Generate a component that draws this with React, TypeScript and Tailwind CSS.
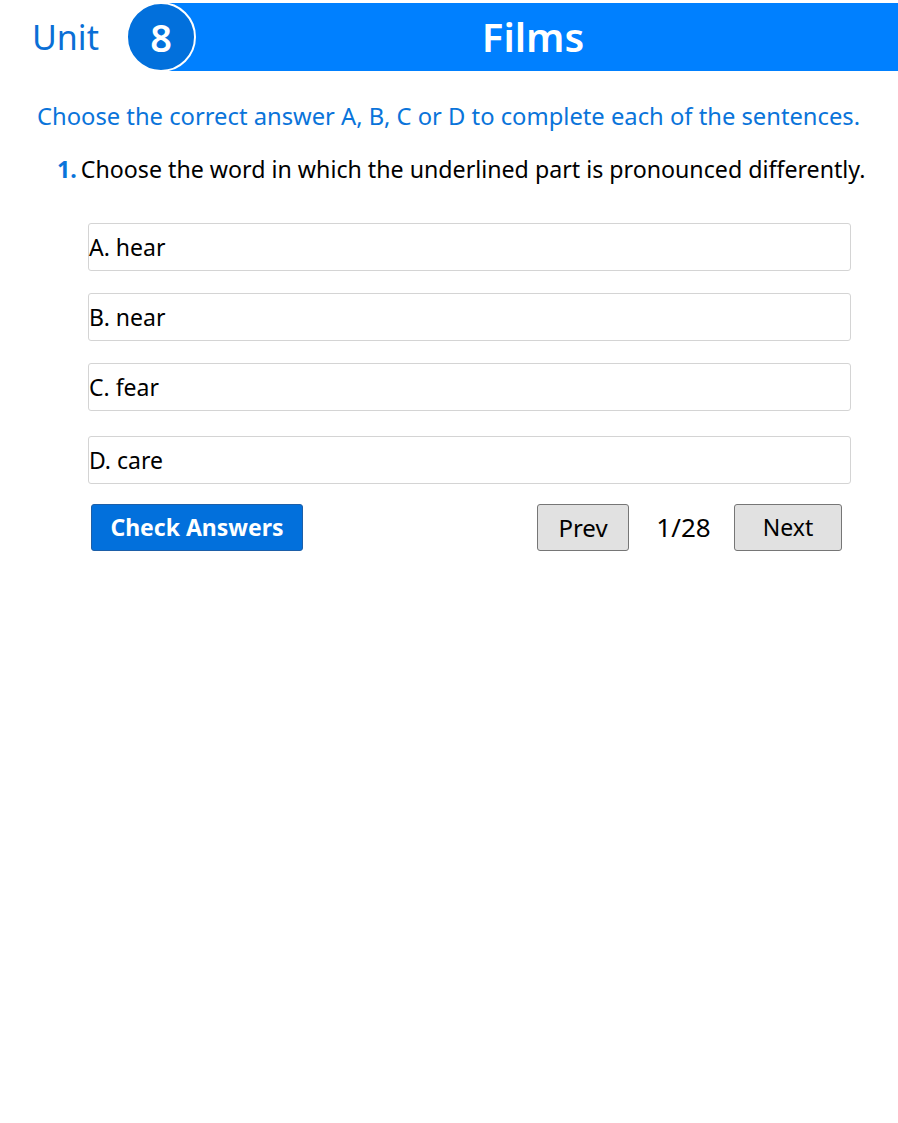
const options = ["A. hear", "B. near", "C. fear", "D. care"];

export default function App() {
    return (
        <div className="w-[898px] min-h-[1123px] bg-white font-['Noto_Sans',sans-serif] text-black">
            {/* Header */}
            <div className="flex items-center pt-[2px] h-[71px]">
                <div className="w-[126px] pl-[32px] text-[34px] leading-none text-[#0a6fd6]">
                    Unit
                </div>
                <div className="relative flex-1 h-[69px]">
                    <div className="absolute left-[34px] right-0 top-[1px] h-[68px] bg-[#0080ff] flex items-center justify-center pl-[8px]">
                        <span className="text-white text-[40px] font-semibold leading-none">
                            Films
                        </span>
                    </div>
                    <div className="absolute left-0 top-0 w-[70px] h-[70px] rounded-full bg-[#0270dc] border-2 border-white flex items-center justify-center">
                        <span className="text-white text-[38px] font-semibold leading-none">
                            8
                        </span>
                    </div>
                </div>
            </div>

            <p className="mt-[30px] pl-[37px] text-[23.75px] leading-[30px] text-[#0a74da]">
                Choose the correct answer A, B, C or D to complete each of the sentences.
            </p>

            <p className="mt-[23px] pl-[57px] text-[23.2px] leading-[30px]">
                <span className="text-[#0a74da] font-bold mr-[4px]">1.</span>
                Choose the word in which the underlined part is pronounced differently.
            </p>

            <div className="ml-[88px] w-[763px] mt-[39px] flex flex-col gap-[22px]">
                {options.map((o, i) => (
                    <div
                        key={o}
                        className={`h-[48px] border border-[#d4d4d4] rounded-[3px] flex items-center text-[23px] ${
                            i === 3 ? "mt-[3px]" : ""
                        }`}
                    >
                        {o}
                    </div>
                ))}
            </div>

            <div className="ml-[91px] w-[751px] mt-[20px] flex items-center">
                <button className="w-[212px] h-[47px] bg-[#0270dc] border border-[#1d5fa8] rounded-[3px] text-white text-[23px] font-bold">
                    Check Answers
                </button>
                <div className="flex-1" />
                <button className="w-[92px] h-[47px] bg-[#e1e1e1] border border-[#767676] rounded-[3px] text-[24px]">
                    Prev
                </button>
                <span className="w-[105px] pl-[4px] text-center text-[26px]">1/28</span>
                <button className="w-[108px] h-[47px] bg-[#e1e1e1] border border-[#767676] rounded-[3px] text-[23px]">
                    Next
                </button>
            </div>
        </div>
    );
}
